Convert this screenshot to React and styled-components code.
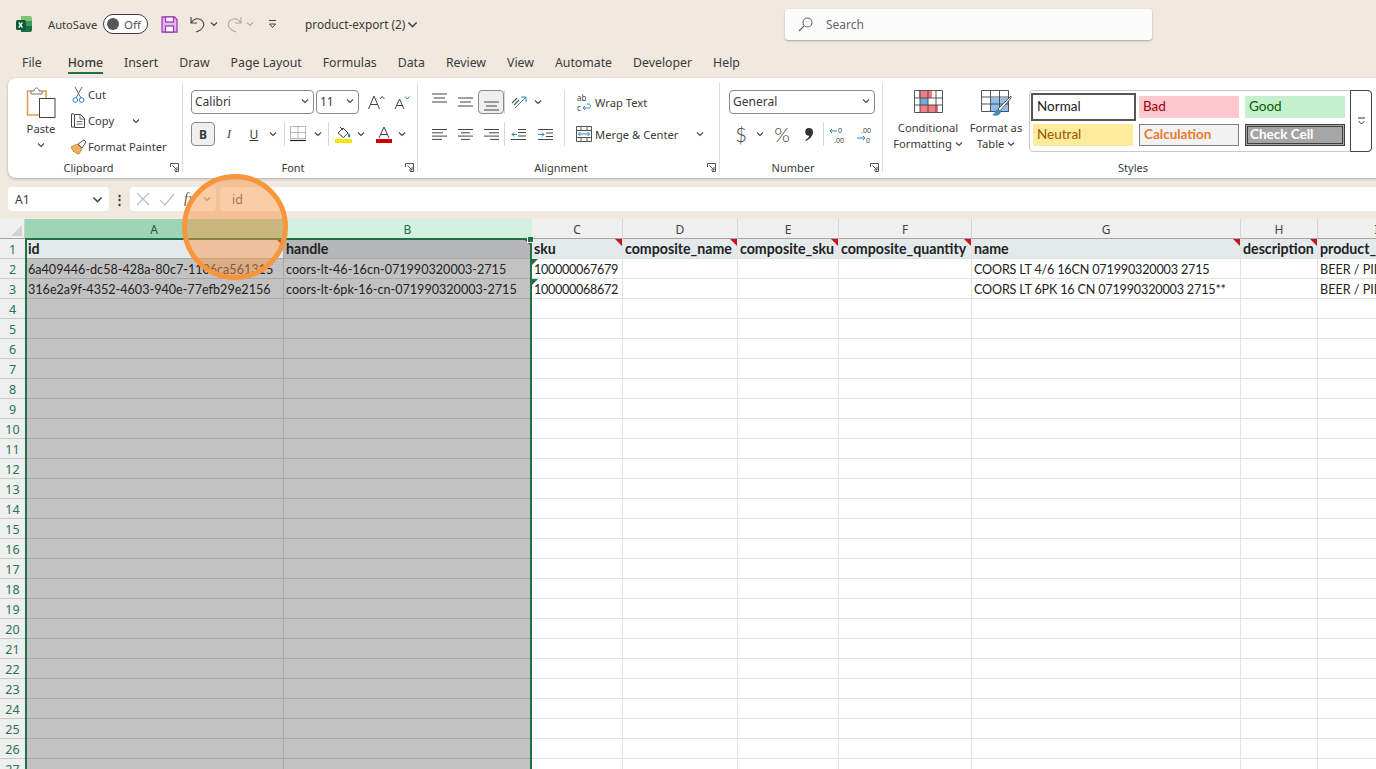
import styled, { createGlobalStyle } from 'styled-components';

const GlobalStyle = createGlobalStyle`
  html, body {
    margin: 0;
    padding: 0;
    width: 1376px;
    height: 769px;
    overflow: hidden;
    background: #f1e9e0;
    font-family: "Noto Sans", "Open Sans", sans-serif;
    color: #3a3a3a;
  }
  * { box-sizing: border-box; }
`;

const Page = styled.div`
  width: 1376px;
  height: 769px;
  display: flex;
  flex-direction: column;
  overflow: hidden;
  position: relative;
  background: #f1e9e0;
`;

/* title bar */
const TitleBar = styled.div`
  height: 48px;
  display: flex;
  align-items: center;
  padding-left: 16px;
  font-size: 11.2px;
`;
const AutoSave = styled.span`
  margin-left: 16px;
  width: 55px;
`;
const Toggle = styled.div`
  width: 45px;
  height: 20px;
  border: 1px solid #3c3c3c;
  border-radius: 10px;
  background: #fff;
  display: flex;
  align-items: center;
  padding-left: 3px;
  gap: 5px;
  font-size: 11.5px;
  color: #555;
`;
const Knob = styled.span`
  width: 12px;
  height: 12px;
  border-radius: 50%;
  background: #575757;
`;
const QuickSlot = styled.div`
  width: ${(p) => p.$w}px;
  display: flex;
  justify-content: center;
  align-items: center;
  margin-left: ${(p) => p.$ml || 0}px;
`;
const DocName = styled.div`
  margin-left: 28px;
  width: 100px;
  font-size: 11.8px;
  white-space: nowrap;
`;
const SearchBox = styled.div`
  margin-left: 367px;
  width: 367px;
  height: 31px;
  background: #fbfbfb;
  border-radius: 3px;
  box-shadow: 0 1px 2px rgba(0, 0, 0, 0.3);
  display: flex;
  align-items: center;
  padding-left: 13px;
  gap: 13px;
  font-size: 12px;
  color: #666;
`;

/* tabs */
const TabBar = styled.div`
  height: 30px;
  display: flex;
  gap: 21px;
  padding-left: 22px;
  font-size: 12.3px;
`;
const Tab = styled.div`
  height: 26px;
  padding-top: 6px;
  line-height: 18px;
  white-space: nowrap;
  margin-right: ${(p) => p.$mr || 0}px;
  font-weight: ${(p) => (p.$active ? 500 : 400)};
  border-bottom: ${(p) => (p.$active ? '2px solid #1f7145' : 'none')};
`;

/* ribbon */
const Ribbon = styled.div`
  margin-left: 8px;
  height: 100px;
  width: 1376px;
  background: #fff;
  border-radius: 8px 0 0 8px;
  box-shadow: 0 1px 3px rgba(0, 0, 0, 0.28);
  display: flex;
  font-size: 11.2px;
`;
const Group = styled.div`
  width: ${(p) => p.$w}px;
  display: flex;
  flex-direction: column;
  border-right: ${(p) => (p.$last ? 'none' : '1px solid #dcdcdc')};
  margin: 5px 0 6px;
`;
const GroupBody = styled.div`
  flex: 1;
  display: flex;
  padding-top: ${(p) => p.$pt ?? 7}px;
  padding-left: ${(p) => p.$pl || 0}px;
`;
const GroupFoot = styled.div`
  display: grid;
  grid-template-columns: 1fr auto 1fr;
  align-items: center;
  height: 18px;
  margin-bottom: -4px;
  font-size: 11px;
  padding-right: 3px;
  padding-left: ${(p) => p.$pl || 0}px;
  & > span {
    grid-column: 2;
    margin-right: ${(p) => p.$shift || 0}px;
  }
  & > svg { grid-column: 3; justify-self: end; }
`;
const BigButton = styled.div`
  width: ${(p) => p.$w}px;
  margin-top: ${(p) => p.$mt || 0}px;
  display: flex;
  flex-direction: column;
  align-items: center;
  line-height: 16px;
  text-align: center;
  white-space: nowrap;
`;
const BigLabel = styled.div`
  margin-top: ${(p) => p.$mt}px;
  margin-bottom: ${(p) => p.$mb || 0}px;
`;
const SmallStack = styled.div`
  display: flex;
  flex-direction: column;
  margin-left: ${(p) => p.$ml || 0}px;
  margin-top: ${(p) => p.$mt || 0}px;
  gap: ${(p) => p.$gap ?? 1}px;
`;
const SmallRow = styled.div`
  height: ${(p) => p.$h || 25}px;
  display: flex;
  align-items: center;
  white-space: nowrap;
`;
const RowIcon = styled.span`
  width: ${(p) => p.$w || 20}px;
  display: flex;
  justify-content: center;
  align-items: center;
`;
const Stack = styled.div`
  display: flex;
  flex-direction: column;
  gap: 8px;
`;
const Row = styled.div`
  display: flex;
  align-items: center;
  height: 24px;
`;
const Select = styled.div`
  width: ${(p) => p.$w}px;
  height: 24px;
  margin-left: ${(p) => p.$ml || 0}px;
  border: 1px solid #8a8a8a;
  border-radius: 4px;
  display: flex;
  align-items: center;
  justify-content: space-between;
  padding: 0 4px 2px 3px;
  font-size: 12px;
`;
const Btn = styled.div`
  width: ${(p) => p.$w || 26}px;
  height: 24px;
  flex: none;
  display: flex;
  align-items: center;
  justify-content: center;
  border-radius: 4px;
  margin-left: ${(p) => p.$ml || 0}px;
  font-size: ${(p) => p.$fs || 12}px;
  font-family: ${(p) => p.$font || 'inherit'};
  font-weight: ${(p) => p.$weight || 400};
  font-style: ${(p) => (p.$italic ? 'italic' : 'normal')};
  text-decoration: ${(p) => (p.$under ? 'underline' : 'none')};
  background: ${(p) => (p.$on ? '#efefef' : 'transparent')};
  border: ${(p) => (p.$on ? '1px solid #8a8a8a' : 'none')};
`;
const VSep = styled.div`
  width: 1px;
  height: 24px;
  background: #d6d6d6;
  flex: none;
  margin: 0 ${(p) => p.$mr || 0}px 0 ${(p) => p.$ml || 0}px;
`;
const TallSep = styled.div`
  width: 1px;
  height: 56px;
  background: #dcdcdc;
  flex: none;
  margin-left: ${(p) => p.$ml}px;
`;
const Gallery = styled.div`
  width: 343px;
  height: 62px;
  border: 1px solid #c8c8c8;
  border-radius: 4px;
  display: flex;
`;
const StyleGrid = styled.div`
  width: 319px;
  padding: 2px 0 0 1px;
  display: grid;
  grid-template-columns: 106px 106px 106px;
  grid-auto-rows: 28px;
`;
const StyleCell = styled.div`
  display: flex;
  align-items: center;
  padding: 0 0 2px 4px;
  margin: ${(p) => (p.$boxed ? '0 1px 0 0' : '3px 4px 3px 2px')};
  font-size: 13.5px;
  font-family: Lato, sans-serif;
  font-weight: ${(p) => (p.$bold ? 700 : 400)};
  color: ${(p) => p.$color};
  background: ${(p) => p.$bg};
  border: ${(p) => p.$border || 'none'};
  outline: ${(p) => p.$outline || 'none'};
  outline-offset: -3px;
`;
const Scroller = styled.div`
  flex: 1;
  border: 1px solid #444;
  margin: -1px -1px -1px 1px;
  border-radius: 0 4px 4px 0;
  display: flex;
  justify-content: center;
  padding-top: 26px;
`;

/* formula bar */
const FormulaBar = styled.div`
  height: 24px;
  margin-top: 9px;
  padding-left: 8px;
  display: flex;
  align-items: center;
  font-size: 12px;
`;
const NameBox = styled.div`
  width: 101px;
  height: 24px;
  background: #fff;
  border-radius: 4px;
  display: flex;
  align-items: center;
  justify-content: space-between;
  padding: 0 6px 0 7px;
`;
const Dots = styled.div`
  width: 21px;
  text-align: center;
  font-weight: 700;
  font-size: 13px;
  line-height: 18px;
`;
const FxBox = styled.div`
  width: 86px;
  height: 24px;
  background: #fff;
  border-radius: 4px;
  display: flex;
  align-items: center;
  padding-left: 6px;
  gap: 9px;
  color: #555;
`;
const FxLabel = styled.span`
  font-family: "Liberation Serif", serif;
  font-style: italic;
  font-size: 14px;
`;
const FormulaInput = styled.div`
  margin-left: 4px;
  flex: 1;
  height: 24px;
  background: #fff;
  border-radius: 4px 0 0 4px;
  display: flex;
  align-items: center;
  padding-left: 12px;
  font-size: 12.5px;
  color: #555;
`;

/* sheet */
const Sheet = styled.div`
  margin-top: 8px;
  flex: 1;
  position: relative;
  overflow: hidden;
  background: #fff;
`;
const Grid = styled.div`
  display: grid;
  grid-template-columns: 25px 259px 248px 91px 115px 101px 133px 269px 77px 118px;
  grid-auto-rows: 20px;
`;
const Corner = styled.div`
  background: #efefef;
  border-bottom: 1px solid #a5a5a5;
  border-right: 1px solid #cfcfcf;
  position: relative;
  &::after {
    content: '';
    position: absolute;
    right: 2px;
    bottom: 2px;
    border-left: 11px solid transparent;
    border-bottom: 11px solid #d3d3d3;
  }
`;
const ColHead = styled.div`
  display: flex;
  align-items: center;
  justify-content: center;
  padding-top: 1px;
  font-size: 12px;
  background: ${(p) => (p.$state === 'active' ? '#9fd5b7' : p.$state === 'sel' ? '#d3f0e0' : '#efefef')};
  color: ${(p) => (p.$state === 'active' ? '#0f5c35' : p.$state === 'sel' ? '#1f7145' : '#444')};
  border-right: 1px solid ${(p) => (p.$state ? 'transparent' : '#d4d4d4')};
  border-bottom: 1px solid #a5a5a5;
`;
const RowHead = styled.div`
  display: flex;
  align-items: center;
  justify-content: center;
  padding-top: 1px;
  font-size: 12.5px;
  color: #2f7352;
  background: #eef0ef;
  border-bottom: 1px solid #c8c8c8;
`;
const Cell = styled.div`
  position: relative;
  font-family: Lato, "Liberation Sans", sans-serif;
  font-size: ${(p) => (p.$head ? 14.2 : 12.6)}px;
  line-height: ${(p) => (p.$head ? 19 : 21)}px;
  padding-left: ${(p) => (p.$first ? 3 : 2)}px;
  letter-spacing: ${(p) => p.$ls || 0}px;
  white-space: nowrap;
  overflow: hidden;
  color: #222;
  font-weight: ${(p) => (p.$head ? 700 : 400)};
  background: ${(p) => {
    if (p.$active) return '#e4e9ec';
    if (p.$sel) return p.$head ? '#b4b6b8' : '#c2c2c2';
    return p.$head ? '#e4e9ec' : '#fff';
  }};
  border-right: 1px solid ${(p) => (p.$sel ? '#a9a9a9' : '#e2e2e2')};
  border-bottom: 1px solid ${(p) => (p.$sel ? '#a9a9a9' : '#e2e2e2')};
`;
const RedMark = styled.span`
  position: absolute;
  top: 0;
  right: 0;
  border-top: 7px solid #c8141e;
  border-left: 7px solid transparent;
`;
const GreenMark = styled.span`
  position: absolute;
  top: 0;
  left: 0;
  border-top: 6px solid #1f7145;
  border-right: 6px solid transparent;
`;
const Selection = styled.div`
  position: absolute;
  left: 25px;
  top: 19px;
  width: 507px;
  bottom: -4px;
  border: 2px solid #1f7145;
  pointer-events: none;
`;
const FillHandle = styled.div`
  position: absolute;
  right: -3px;
  top: -3px;
  width: 6px;
  height: 6px;
  background: #1f7145;
  border-left: 1px solid #fff;
  border-bottom: 1px solid #fff;
`;
const Spotlight = styled.div`
  position: absolute;
  left: 182px;
  top: 174px;
  width: 106px;
  height: 106px;
  border-radius: 50%;
  border: 5px solid #f7963c;
  background: rgba(247, 150, 70, 0.48);
  pointer-events: none;
`;

/* icons */
const Chev = ({ c = '#444', s = 8 }) => (
  <svg width={s} height={s} viewBox="0 0 8 8" fill="none">
    <path d="M1 2.500l3 3 3-3" stroke={c} strokeWidth="1.100" />
  </svg>
);
const Launcher = () => (
  <svg width="9" height="9" viewBox="0 0 9 9" fill="none" stroke="#555">
    <path d="M.5 4V.5H8.500V8.500H5M2.500 2.500L7 7M7 4v3H4" />
  </svg>
);
const ExcelLogo = () => (
  <svg width="16" height="16" viewBox="0 0 16 16">
    <path d="M5 0h9a2 2 0 012 2v4H5z" fill="#7cc576" />
    <path d="M5 5h11v6H5z" fill="#3c9a5f" />
    <path d="M5 10h11v4a2 2 0 01-2 2H5z" fill="#1d6f42" />
    <rect y="4" width="10" height="10" rx="1.500" fill="#0f5c35" />
    <path d="M2.800 6.500l3.600 5M6.400 6.500l-3.600 5" stroke="#fff" strokeWidth="1.300" />
  </svg>
);
const SaveIcon = () => (
  <svg width="17" height="17" viewBox="0 0 17 17" fill="none" stroke="#9b3fb5" strokeWidth="1.300">
    <path d="M1 1h12.500L16 3.500V16H1z" fill="#e6b4ef" />
    <rect x="4.500" y="1" width="8" height="5" fill="#fff" />
    <rect x="4.500" y="10" width="8" height="6" fill="#fff" />
  </svg>
);
const Undo = ({ c = '#444', flip }) => (
  <svg width="16" height="17" viewBox="0 0 16 17" fill="none" stroke={c} strokeWidth="1.100"
    style={flip ? { transform: 'scaleX(-1)' } : undefined}>
    <path d="M1 1v6h6M1 7c2-3 5-5 8-4 4 1 6 5 4 8-1 2-4 4-7 5" />
  </svg>
);
const Customize = () => (
  <svg width="9" height="10" viewBox="0 0 9 10" fill="none" stroke="#444">
    <path d="M1 1.500h7M1.500 5l3 3.500 3-3.500z" />
  </svg>
);
const SearchIcon = () => (
  <svg width="15" height="15" viewBox="0 0 15 15" fill="none" stroke="#666" strokeWidth="1.100">
    <circle cx="9.500" cy="5.500" r="4.500" />
    <path d="M6 9L1 14" />
  </svg>
);
const PasteIcon = () => (
  <svg width="30" height="32" viewBox="0 0 30 32" fill="none">
    <path d="M5 4H1.500v24H14" stroke="#dca14c" strokeWidth="1.500" />
    <path d="M16 4h4v7" stroke="#dca14c" strokeWidth="1.500" />
    <path d="M5 6V4h3c0-4 5-4 5 0h3v3H5z" fill="#fff" stroke="#777" />
    <rect x="13.500" y="11.500" width="15.500" height="19" fill="#fff" stroke="#444" />
  </svg>
);
const CutIcon = () => (
  <svg width="13" height="16" viewBox="0 0 13 16" fill="none">
    <path d="M3 0l6 11M10 0L4 11" stroke="#666" />
    <circle cx="3.300" cy="13" r="2.300" stroke="#2b7cd3" />
    <circle cx="9.700" cy="13" r="2.300" stroke="#2b7cd3" />
  </svg>
);
const CopyIcon = () => (
  <svg width="15" height="16" viewBox="0 0 15 16" fill="none" stroke="#444">
    <path d="M3 1H.5v13H3" />
    <path d="M3.500 1.500h6l4 4v9h-10z" />
    <path d="M9 1.500V6h4.500M5.500 8.500h6M5.500 11h6" strokeWidth=".8" />
  </svg>
);
const PainterIcon = () => (
  <svg width="17" height="16" viewBox="0 0 17 16">
    <path d="M1 8l6-3 5 5-3 5c-2 0-3-1-4-2l-1 0c-1-1-2-3-3-5z" fill="#efb35e" stroke="#c67d22" strokeWidth=".8" />
    <path d="M8 5l6-4 2 2-4 6z" fill="#fff" stroke="#555" />
  </svg>
);
const GrowA = ({ size, up }) => (
  <svg width="17" height="15" viewBox="0 0 17 15">
    <path d={size === 'big' ? 'M.5 14L6 1l5.500 13M2.500 9.500h7' : 'M2 14L6.500 4 11 14M3.500 10.500h6'} fill="none" stroke="#444" />
    <path d={up ? 'M12 4l2.200-2.500L16.500 4' : 'M12 1.500l2.200 2.500 2.300-2.500'} fill="none" stroke={up ? '#444' : '#2b88b8'} />
  </svg>
);
const BordersIcon = () => (
  <svg width="16" height="16" viewBox="0 0 16 16" fill="none" stroke="#777" strokeDasharray="1 1">
    <path d="M.5.500h15v12H.5zM8 .5v12M.5 6.500h15" />
    <path d="M0 14.500h16" stroke="#222" strokeDasharray="none" strokeWidth="1.200" />
  </svg>
);
const FillIcon = () => (
  <svg width="17" height="17" viewBox="0 0 17 17">
    <path d="M3 7l5-5 5 5-4.500 4.500z" fill="none" stroke="#444" />
    <path d="M5 1l3 3" stroke="#444" />
    <path d="M14 7c1 2 2 3 1 4s-2 0-2-1 0-2 1-3z" fill="#1f7fb5" />
    <rect y="13" width="17" height="4" fill="#f5e500" />
  </svg>
);
const FontColor = () => (
  <svg width="16" height="17" viewBox="0 0 16 17">
    <path d="M3 12L8 1l5 11M4.500 8.500h7" fill="none" stroke="#444" />
    <rect y="13" width="16" height="4" fill="#d00000" />
  </svg>
);
const HAlign = ({ mode }) => {
  const rows = { l: [[0, 15], [0, 11], [0, 15], [0, 10]], c: [[0, 15], [3, 12], [0, 15], [3, 12]], r: [[0, 15], [5, 15], [0, 15], [6, 15]] }[mode];
  return (
    <svg width="15" height="13" viewBox="0 0 15 13" stroke="#444">
      {rows.map(([a, b], i) => <path key={i} d={`M${a} ${1.5 + i * 3.3}H${b}`} />)}
    </svg>
  );
};
const VAlign = ({ y }) => (
  <svg width="15" height="20" viewBox="0 0 15 20" stroke="#444">
    {[0, 1, 2].map((i) => <path key={i} d={`M${i === 1 ? 2 : 0} ${y + i * 4}H${i === 1 ? 13 : 15}`} />)}
  </svg>
);
const Orient = () => (
  <svg width="16" height="16" viewBox="0 0 16 16" fill="none">
    <path d="M1 9l5-5M3 11l5-5" stroke="#555" strokeWidth="1.200" />
    <path d="M4 14L15 3M10 3h5v5" stroke="#2b88b8" />
  </svg>
);
const Indent = ({ back }) => (
  <svg width="15" height="13" viewBox="0 0 15 13" fill="none">
    <path d={back ? 'M7 1.500h8M7 4.500h8M7 8h8M0 11.500h15' : 'M0 1.500h15M8 5h7M8 8.500h7M0 11.500h15'} stroke="#444" />
    <path d={back ? 'M6 6.500H1M3 4.500L1 6.500l2 2' : 'M0 6.500h6M4 4.500l2 2-2 2'} stroke="#2b88b8" />
  </svg>
);
const WrapIcon = () => (
  <svg width="16" height="20" viewBox="0 0 16 20" fill="none">
    <text x="1" y="9" fontSize="8" fill="#444" fontFamily="Noto Sans">ab</text>
    <text x="1" y="19" fontSize="8" fill="#444" fontFamily="Noto Sans">c</text>
    <path d="M7 16h6c2 0 2-4 0-4h-2M7 16l2-2M7 16l2 2" stroke="#2b88b8" />
  </svg>
);
const MergeIcon = () => (
  <svg width="16" height="16" viewBox="0 0 16 16" fill="none">
    <path d="M.5.500h15v15H.5zM.5 4.500h15M.5 11.500h15" stroke="#555" />
    <path d="M5 .5v4M11 .5v4M5 11.500v4M11 11.500v4" stroke="#555" />
    <path d="M2.500 8h11M4.500 6l-2 2 2 2M11.500 6l2 2-2 2" stroke="#2b88b8" />
  </svg>
);
const CommaIcon = () => (
  <svg width="10" height="13" viewBox="0 0 10 13">
    <path d="M5 0a4 4 0 014 4c0 4-3 7-7 9l-.5-1C4 10.500 5 9 5.300 7.800A3.900 3.900 0 115 0z" fill="#333" />
  </svg>
);
const DecIcon = ({ more }) => (
  <svg width="17" height="20" viewBox="0 0 17 20" fill="none">
    <text x={more ? 5 : 9} y="9" fontSize="7" fill="#444" fontFamily="Noto Sans">{more ? '.00' : '0'}</text>
    <text x={more ? 10 : 5} y="19" fontSize="7" fill="#444" fontFamily="Noto Sans">{more ? '0' : '.00'}</text>
    <path d={more ? 'M1 14h8M7 12l2 2-2 2' : 'M1 7h7M3 5L1 7l2 2'} stroke="#2b88b8" />
  </svg>
);
const CondIcon = () => (
  <svg width="29" height="23" viewBox="0 0 29 23" fill="none">
    <path d="M5 1h13v7H5zM6 15h18v7H6z" fill="#f27d85" />
    <path d="M6 8h8v7H6z" fill="#73a9e0" />
    <path d="M.5.500h28v22H.5zM.5 8h28M.5 15h28M6 .5v22M14 .5v22M22 .5v22" stroke="#444" strokeWidth=".9" />
  </svg>
);
const TableIcon = () => (
  <svg width="31" height="28" viewBox="0 0 31 28" fill="none">
    <path d="M10 8h18v14H10z" fill="#8fc0ec" />
    <path d="M.5.500h27v21H.5zM.5 7h27M.5 14h27M9.500.5v21M18.500.5v21" stroke="#444" strokeWidth=".9" />
    <path d="M30 6L17 19l2 2L30 8z" fill="#fff" stroke="#555" />
    <path d="M17 19c-3 1-2 4-6 6 4 2 9 0 9-4z" fill="#3f8bc4" />
  </svg>
);
const ScrollGlyph = () => (
  <svg width="9" height="8" viewBox="0 0 9 8" fill="none" stroke="#333">
    <path d="M1 1h7M1.500 4l3 3 3-3" />
  </svg>
);
const CrossIcon = () => (
  <svg width="14" height="14" viewBox="0 0 14 14" stroke="#bdbdbd" strokeWidth="1.200">
    <path d="M1 1l12 12M13 1L1 13" />
  </svg>
);
const CheckIcon = () => (
  <svg width="16" height="13" viewBox="0 0 16 13" fill="none" stroke="#bdbdbd" strokeWidth="1.200">
    <path d="M1 7l5 5L15 1" />
  </svg>
);

const tabs = ['Insert', 'Draw', 'Page Layout', 'Formulas', 'Data', 'Review', 'View', 'Automate', 'Developer', 'Help'];
const columns = ['A', 'B', 'C', 'D', 'E', 'F', 'G', 'H', 'I'];
const headers = ['id', 'handle', 'sku', 'composite_name', 'composite_sku', 'composite_quantity', 'name', 'description', 'product_category'];
const records = [
  ['6a409446-dc58-428a-80c7-1106ca561315', 'coors-lt-46-16cn-071990320003-2715', '100000067679', '', '', '', 'COORS LT 4/6 16CN 071990320003 2715', '', 'BEER / PILSNER'],
  ['316e2a9f-4352-4603-940e-77efb29e2156', 'coors-lt-6pk-16-cn-071990320003-2715', '100000068672', '', '', '', 'COORS LT 6PK 16 CN 071990320003 2715**', '', 'BEER / PILSNER'],
];
// Lato digits run wider than Calibri's, tighten the number-heavy columns
const bodySpacing = { 2: -0.3, 6: -0.17 };
const rowNumbers = Array.from({ length: 27 }, (_, i) => i + 1);

function Clipboard() {
  return (
    <Group $w={175}>
      <GroupBody $pt={0} $pl={8}>
        <BigButton $w={50} $mt={4}>
          <PasteIcon />
          <BigLabel $mt={2} $mb={4}>Paste</BigLabel>
          <Chev />
        </BigButton>
        <SmallStack $ml={2} $mt={-1}>
          <SmallRow><RowIcon><CutIcon /></RowIcon>Cut</SmallRow>
          <SmallRow><RowIcon><CopyIcon /></RowIcon>Copy<RowIcon $w={44}><Chev /></RowIcon></SmallRow>
          <SmallRow><RowIcon><PainterIcon /></RowIcon>Format Painter</SmallRow>
        </SmallStack>
      </GroupBody>
      <GroupFoot $shift={10}><span>Clipboard</span><Launcher /></GroupFoot>
    </Group>
  );
}

function FontGroup() {
  return (
    <Group $w={235}>
      <GroupBody $pl={8}>
        <Stack>
          <Row>
            <Select $w={123}>Calibri<Chev /></Select>
            <Select $w={43} $ml={2}>11<Chev /></Select>
            <Btn $ml={7} $w={20}><GrowA size="big" up /></Btn>
            <Btn $ml={5} $w={20}><GrowA size="small" /></Btn>
          </Row>
          <Row>
            <Btn $w={24} $on $weight={700}>B</Btn>
            <Btn $w={26} $ml={1} $italic $font="'Liberation Serif', serif">I</Btn>
            <Btn $w={24} $under>U</Btn>
            <Btn $w={14}><Chev /></Btn>
            <VSep $ml={4} $mr={1} />
            <Btn $w={22} $ml={1}><BordersIcon /></Btn>
            <Btn $w={14} $ml={2}><Chev /></Btn>
            <VSep $ml={3} $mr={1} />
            <Btn $w={22} $ml={2}><FillIcon /></Btn>
            <Btn $w={14}><Chev /></Btn>
            <Btn $w={22} $ml={5}><FontColor /></Btn>
            <Btn $w={14}><Chev /></Btn>
          </Row>
        </Stack>
      </GroupBody>
      <GroupFoot $shift={11}><span>Font</span><Launcher /></GroupFoot>
    </Group>
  );
}

function Alignment() {
  return (
    <Group $w={302}>
      <GroupBody $pl={8}>
        <Stack>
          <Row>
            <Btn><VAlign y={2} /></Btn>
            <Btn><VAlign y={6} /></Btn>
            <Btn $on><VAlign y={10} /></Btn>
            <VSep />
            <Btn $w={28}><Orient /></Btn>
            <Btn $w={12} $ml={-1}><Chev /></Btn>
          </Row>
          <Row>
            <Btn><HAlign mode="l" /></Btn>
            <Btn><HAlign mode="c" /></Btn>
            <Btn><HAlign mode="r" /></Btn>
            <VSep />
            <Btn $w={27}><Indent back /></Btn>
            <Btn $w={27}><Indent /></Btn>
          </Row>
        </Stack>
        <TallSep $ml={5} />
        <SmallStack $ml={8} $gap={8}>
          <SmallRow $h={24}><RowIcon $w={22}><WrapIcon /></RowIcon>Wrap Text</SmallRow>
          <SmallRow $h={24}><RowIcon $w={22}><MergeIcon /></RowIcon>Merge &amp; Center<RowIcon $w={44}><Chev /></RowIcon></SmallRow>
        </SmallStack>
      </GroupBody>
      <GroupFoot $shift={12}><span>Alignment</span><Launcher /></GroupFoot>
    </Group>
  );
}

function NumberGroup() {
  return (
    <Group $w={163}>
      <GroupBody $pl={9}>
        <Stack>
          <Select $w={146}>General<Chev /></Select>
          <Row>
            <Btn $w={24} $fs={20} $font="Lato, sans-serif" $weight={300}>$</Btn>
            <Btn $w={14}><Chev /></Btn>
            <Btn $w={30} $fs={20} $font="Lato, sans-serif" $weight={300}>%</Btn>
            <Btn $w={24}><CommaIcon /></Btn>
            <VSep $ml={2} />
            <Btn $w={27}><DecIcon /></Btn>
            <Btn $w={27}><DecIcon more /></Btn>
          </Row>
        </Stack>
      </GroupBody>
      <GroupFoot $shift={13}><span>Number</span><Launcher /></GroupFoot>
    </Group>
  );
}

function Styles() {
  return (
    <Group $w={493} $last>
      <GroupBody $pl={10}>
        <BigButton $w={70}>
          <CondIcon />
          <BigLabel $mt={7}>Conditional<br />Formatting <Chev /></BigLabel>
        </BigButton>
        <BigButton $w={66}>
          <TableIcon />
          <BigLabel $mt={2}>Format as<br />Table <Chev /></BigLabel>
        </BigButton>
        <Gallery>
          <StyleGrid>
            <StyleCell $boxed $color="#222" $bg="#fff" $border="2px solid #555">Normal</StyleCell>
            <StyleCell $color="#9c0006" $bg="#ffc7ce">Bad</StyleCell>
            <StyleCell $color="#006100" $bg="#c6efce">Good</StyleCell>
            <StyleCell $color="#9c5700" $bg="#ffeb9c">Neutral</StyleCell>
            <StyleCell $bold $color="#e9792b" $bg="#f2f2f2" $border="1px solid #7f7f7f">Calculation</StyleCell>
            <StyleCell $bold $color="#fff" $bg="#a5a5a5" $border="1px solid #3f3f3f" $outline="1px solid #3f3f3f">Check Cell</StyleCell>
          </StyleGrid>
          <Scroller><ScrollGlyph /></Scroller>
        </Gallery>
      </GroupBody>
      <GroupFoot $pl={10}><span>Styles</span></GroupFoot>
    </Group>
  );
}

function SheetRow({ n }) {
  const isHead = n === 1;
  const values = isHead ? headers : records[n - 2] || [];
  return (
    <>
      <RowHead>{n}</RowHead>
      {columns.map((_, c) => (
        <Cell
          key={c}
          $head={isHead}
          $first={c === 0}
          $sel={c < 2}
          $active={isHead && c === 0}
          $ls={isHead ? 0 : bodySpacing[c]}
        >
          {values[c]}
          {isHead && <RedMark />}
          {c === 2 && (n === 2 || n === 3) && <GreenMark />}
        </Cell>
      ))}
    </>
  );
}

function SheetGrid() {
  return (
    <Sheet>
      <Grid>
        <Corner />
        {columns.map((c, i) => (
          <ColHead key={c} $state={i === 0 ? 'active' : i === 1 ? 'sel' : undefined}>{c}</ColHead>
        ))}
        {rowNumbers.map((n) => <SheetRow key={n} n={n} />)}
      </Grid>
      <Selection><FillHandle /></Selection>
    </Sheet>
  );
}

export default function App() {
  return (
    <Page>
      <GlobalStyle />
      <TitleBar>
        <ExcelLogo />
        <AutoSave>AutoSave</AutoSave>
        <Toggle><Knob />Off</Toggle>
        <QuickSlot $w={17} $ml={13}><SaveIcon /></QuickSlot>
        <QuickSlot $w={16} $ml={12}><Undo /></QuickSlot>
        <QuickSlot $w={8} $ml={4}><Chev /></QuickSlot>
        <QuickSlot $w={16} $ml={8}><Undo c="#a8a8a8" flip /></QuickSlot>
        <QuickSlot $w={8} $ml={4}><Chev c="#a8a8a8" /></QuickSlot>
        <QuickSlot $w={9} $ml={14}><Customize /></QuickSlot>
        <DocName>product-export (2)</DocName>
        <QuickSlot $w={12} $ml={1}><Chev s={11} /></QuickSlot>
        <SearchBox><SearchIcon />Search</SearchBox>
      </TitleBar>
      <TabBar>
        <Tab $mr={5}>File</Tab>
        <Tab $active>Home</Tab>
        {tabs.map((t) => <Tab key={t}>{t}</Tab>)}
      </TabBar>
      <Ribbon>
        <Clipboard />
        <FontGroup />
        <Alignment />
        <NumberGroup />
        <Styles />
      </Ribbon>
      <FormulaBar>
        <NameBox>A1<Chev s={11} /></NameBox>
        <Dots>⋮</Dots>
        <FxBox>
          <CrossIcon /><CheckIcon />
          <FxLabel>fx</FxLabel>
          <Chev c="#999" />
        </FxBox>
        <FormulaInput>id</FormulaInput>
      </FormulaBar>
      <SheetGrid />
      <Spotlight />
    </Page>
  );
}
